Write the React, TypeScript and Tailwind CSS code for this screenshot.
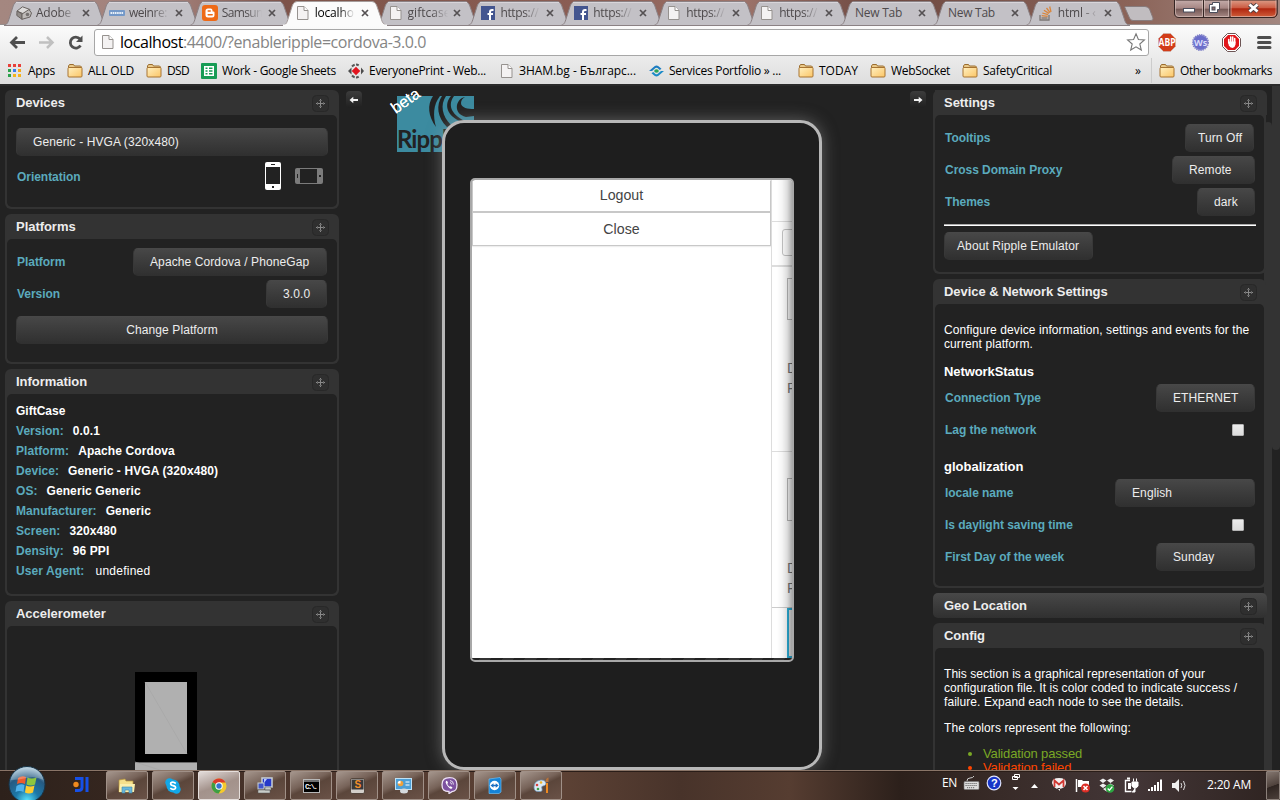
import React, { useLayoutEffect, useRef } from "react";

/* Text whose tracking is adjusted so that it fills a given width. */
function Fit({ w, children, className = "" }: { w: number; children: React.ReactNode; className?: string }) {
  const ref = useRef<HTMLSpanElement>(null);
  useLayoutEffect(() => {
    const el = ref.current;
    if (!el) return;
    el.style.letterSpacing = "0px";
    const n = (el.textContent || "").length;
    el.style.letterSpacing = (w - el.getBoundingClientRect().width) / n + "px";
  }, [w]);
  return (
    <span ref={ref} className={`inline-block whitespace-nowrap ${className}`}>
      {children}
    </span>
  );
}

/* ---------- small drawings ---------- */

const Page = () => (
  <svg width="12" height="14" viewBox="0 0 12 14" className="shrink-0">
    <path d="M.5.5h6.5l4 4v9H.5z" fill="#f4f2f2" stroke="#96928f" />
    <path d="M7 .5v4h4" fill="#fff" stroke="#96928f" />
  </svg>
);
const Folder = () => (
  <svg width="16" height="14" viewBox="0 0 16 14" className="shrink-0">
    <defs>
      <linearGradient id="fold" x1="0" y1="0" x2="1" y2="1">
        <stop offset="0" stopColor="#fff0c0" />
        <stop offset="1" stopColor="#fbc566" />
      </linearGradient>
    </defs>
    <path d="M1.500 4V2l1-1.500h4L7.500 2h6l1 1v2z" fill="#e9c98a" stroke="#9a6c2e" />
    <path d="M1 4.500q0-1 1-1h12.500q.5 0 .5 1v7.500q0 1-1 1H2q-1 0-1-1z" fill="url(#fold)" stroke="#a87432" />
  </svg>
);
const Facebook = () => (
  <svg width="14" height="14" viewBox="0 0 14 14">
    <rect width="14" height="14" fill="#43558f" />
    <path d="M12.5 4H11c-1.400 0-2 .8-2 2v8M6.500 8h5.500" fill="none" stroke="#fff" strokeWidth="2" />
  </svg>
);
const Cube = () => (
  <svg width="16" height="14" viewBox="0 0 16 14">
    <path d="M1 5L6.500.8 14 3.500 9 8.500z" fill="#dddbda" stroke="#68625f" />
    <path d="M1 5l5 3v5.300L.8 9.500z" fill="#918c89" stroke="#68625f" />
    <path d="M6 8l7-4.500 2.500 3.500-1.500 4-8 2.300z" fill="#bebab8" stroke="#68625f" />
    <circle cx="11.500" cy="8.500" r="1.800" fill="#757170" />
  </svg>
);
const Weinre = () => (
  <svg width="16" height="6" viewBox="0 0 16 6">
    <rect width="16" height="6" rx="1" fill="#7398c8" />
    <path d="M1.500 3h13" stroke="#e8f0f8" strokeWidth="2" strokeDasharray="1.600 .6" />
  </svg>
);
const Blogger = () => (
  <svg width="16" height="16" viewBox="0 0 16 16">
    <rect width="16" height="16" rx="3" fill="#ee6a17" />
    <path d="M6 3.500h2.500q2 0 2 2v1h1q1 0 1 1v2.500q0 2.500-2.500 2.500H6q-2.500 0-2.500-2.500V6q0-2.500 2.500-2.500z" fill="#fff" />
    <path d="M6.200 6h2M6.200 9.800h4" stroke="#ee6a17" strokeWidth="1.500" strokeLinecap="round" />
  </svg>
);
const StackO = () => (
  <svg width="13" height="15" viewBox="0 0 13 15">
    <path d="M1 9v5h9V9" fill="none" stroke="#7b7674" strokeWidth="1.300" />
    <path d="M2.500 12h6" stroke="#8a7a6c" strokeWidth="1.400" />
    <path d="M2.700 9.700l6 .7M3.300 7l5.800 1.700M4.900 4.200L10 7.400M7.500 2l3.600 4.700M10.700.5l1.300 5.500" stroke="#d9853b" strokeWidth="1.300" />
  </svg>
);

type Tab = { icon: React.ReactNode; text: string; w: number };
const tabs: Tab[] = [
  { icon: <Cube />, text: "Adobe", w: 35 },
  { icon: <Weinre />, text: "weinre:", w: 38 },
  { icon: <Blogger />, text: "Samsun", w: 41 },
  { icon: <Page />, text: "localho", w: 39 },
  { icon: <Page />, text: "giftcase", w: 43 },
  { icon: <Facebook />, text: "https://", w: 38 },
  { icon: <Facebook />, text: "https://", w: 38 },
  { icon: <Page />, text: "https://", w: 38 },
  { icon: <Page />, text: "https://", w: 38 },
  { icon: null, text: "New Tab", w: 47 },
  { icon: null, text: "New Tab", w: 47 },
  { icon: <StackO />, text: "html - ‹", w: 38 },
];

function TabItem({ tab, active }: { tab: Tab; active: boolean }) {
  return (
    <div className={`relative h-[26px] w-[92.900px] shrink-0 ${active ? "z-10" : ""}`}>
      <svg width="104" height="26" viewBox="0 0 104 26" className="absolute left-0 top-0">
        <path
          d="M0 25.500C4 24 4 22 6 16L9.500 5Q11 1.500 14 1.500H89Q92 1.500 93.500 5L98 18C99.500 23 100 24 104 25.500z"
          fill={active ? "#fbfbfb" : "#c3c1c6"}
          stroke={active ? "#a59c9b" : "#8b8184"}
          strokeWidth="1"
        />
        {active ? <path d="M0 25.500H104" stroke="#fbfbfb" strokeWidth="2" /> : <path d="M12 2.500H91" stroke="#d8d5da" />}
      </svg>
      <div className="relative flex h-[26px] items-center pl-[12px]">
        {tab.icon && <div className="flex w-[20px] items-center justify-center pr-1">{tab.icon}</div>}
        <div
          className={`flex h-[18px] flex-1 items-center overflow-hidden text-[12px] leading-[18px] ${active ? "text-black" : "text-[#4e4a4c]"} ${tab.icon ? "[mask-image:linear-gradient(90deg,#000_24px,transparent_40px)]" : "pl-[3px]"}`}
        >
          <Fit w={tab.w}>{tab.text}</Fit>
        </div>
        <svg width="8" height="8" viewBox="0 0 8 8" className="mr-[7px] shrink-0">
          <path d="M1 1l6 6M7 1L1 7" stroke="#555153" strokeWidth="1.700" />
        </svg>
      </div>
    </div>
  );
}

function WindowControls() {
  return (
    <svg width="104" height="19" viewBox="0 0 104 19" className="absolute left-[1174px] top-0">
      <defs>
        <linearGradient id="wc" x1="0" y1="0" x2="0" y2="1">
          <stop offset="0" stopColor="#c5adab" />
          <stop offset=".48" stopColor="#a58582" />
          <stop offset=".5" stopColor="#735653" />
          <stop offset="1" stopColor="#a98b87" />
        </linearGradient>
        <linearGradient id="wr" x1="0" y1="0" x2="0" y2="1">
          <stop offset="0" stopColor="#dc9c87" />
          <stop offset=".45" stopColor="#cc5b42" />
          <stop offset=".5" stopColor="#b0260f" />
          <stop offset="1" stopColor="#d2603c" />
        </linearGradient>
      </defs>
      <path d="M.5 0V13q0 4.500 4.500 4.500H98q5 0 5-4.500V0z" fill="url(#wc)" stroke="#352523" />
      <path d="M56 0V17.500H98q5 0 5-4.500V0z" fill="url(#wr)" stroke="#352523" />
      <path d="M29.500 0V17.500" stroke="#352523" />
      <path d="M1.500 0V13q0 3.500 3.500 3.500H28.500V0M30.500 0V16.500H54.500V0M57 0V16.500H98q4 0 4-3.500V0" fill="none" stroke="#dfc9c4" strokeOpacity=".6" />
      <rect x="9.500" y="8.500" width="11" height="3.500" fill="#fff" stroke="#4b4e5c" />
      <path d="M38.500 2.500h7v7h-2v3h-8v-8h3z" fill="#fff" stroke="#4b4e5c" />
      <rect x="38" y="7" width="3" height="3" fill="#8d6d6a" stroke="#4b4e5c" />
      <path d="M75.500 4.500l8 7M83.500 4.500l-8 7" stroke="#4b4144" strokeWidth="4.500" />
      <path d="M75.500 4.500l8 7M83.500 4.500l-8 7" stroke="#fff" strokeWidth="2.800" />
    </svg>
  );
}

function TabStrip() {
  return (
    <div className="relative flex h-[25px] shrink-0 bg-[linear-gradient(90deg,#a48780_0,#a3817b_170px,#7d5349_285px,#8b5e54_600px,#9d746b_740px,#6d4840_880px,#8b6459_1130px,#a38780_1280px)] pl-[4px] shadow-[inset_0_-1px_0_#958d8c]">
      {tabs.map((t, i) => (
        <TabItem key={i} tab={t} active={i === 3} />
      ))}
      <svg width="34" height="17" viewBox="0 0 34 17" className="ml-[3px] mt-[5px] shrink-0">
        <path d="M3 1.500H23Q26 1.500 27.500 4L31 13Q31.500 15.500 29 15.500H11Q8.500 15.500 7.500 13L3.500 4Q2.500 2 3 1.500z" fill="#c1bdc0" stroke="#877b7c" />
      </svg>
      <WindowControls />
    </div>
  );
}

function Toolbar() {
  return (
    <div className="relative z-10 flex h-[33px] shrink-0 items-center">
      <svg width="94" height="33" viewBox="0 0 94 33" className="shrink-0">
        <path d="M25 17.500H12M17 12l-5.500 5.500L17 23" fill="none" stroke="#4f4f4f" strokeWidth="2.800" />
        <path d="M39 17.500H52M47 12l5.500 5.500L47 23" fill="none" stroke="#c0c0c0" strokeWidth="2.500" />
        <path d="M80.500 20.500a5.500 5.500 0 1 1-.5-6.500" fill="none" stroke="#4f4f4f" strokeWidth="2.800" />
        <path d="M82.500 10.500v6.500h-6.500z" fill="#4f4f4f" />
      </svg>
      <div className="mt-px flex h-[27px] w-[1055px] items-center rounded-[3px] border border-[#a7a7a7] bg-white pl-[7px]">
        <div className="flex w-[18px]">
          <Page />
        </div>
        <Fit w={306} className="text-[16px] leading-[24px] text-[#858585]">
          <span className="text-black">localhost</span>:4400/?enableripple=cordova-3.0.0
        </Fit>
        <svg width="20" height="20" viewBox="0 0 20 20" className="ml-auto mr-[2px]">
          <path d="M10 1.800l2.400 5.700 6 .5-4.600 4 1.500 6L10 14.800 4.700 18l1.500-6-4.600-4 6-.5z" fill="#fff" stroke="#777" strokeWidth="1.100" />
        </svg>
      </div>
      <svg width="131" height="33" viewBox="0 0 131 33" className="shrink-0">
        <path d="M14.500 8.500h7l5 5v8l-5 5h-7l-5-5v-8z" fill="#d23c19" stroke="#c9b9b3" strokeWidth=".6" />
        <text x="9.500" y="21" fontSize="10" fontWeight="700" fill="#fff" fontFamily="Open Sans" textLength="17" lengthAdjust="spacingAndGlyphs">
          ABP
        </text>
        <circle cx="51.500" cy="17.500" r="7.500" fill="#6a6dca" stroke="#8082c8" strokeWidth="2" strokeDasharray="1.300 .8" />
        <text x="45" y="21" fontSize="9" fontWeight="700" fill="#d9dafa" fontFamily="Open Sans">
          Ws
        </text>
        <path d="M78.500 8.500h8l5 5v8l-5 5h-8l-5-5v-8z" fill="#fff" stroke="#6d5555" />
        <path d="M79 10h7l4 4v7l-4 4h-7l-4-4v-7z" fill="#e1161a" />
        <path d="M79.700 18v-3.500M81.700 17v-5M83.700 17v-5M85.700 18v-4.500" stroke="#fff" strokeWidth="1.500" strokeLinecap="round" />
        <path d="M79 16.500h7.500v3q-.5 3-3 3.500-2.500-.2-3.700-2.700z" fill="#fff" />
        <path d="M109.500 12.500h11.500M109.500 17.500h11.500M109.500 22.500h11.500" stroke="#4e4e4e" strokeWidth="3" strokeLinecap="round" />
      </svg>
    </div>
  );
}

const AppsIcon = () => (
  <svg width="13" height="13" viewBox="0 0 13 13">
    {["#e8403a", "#e8403a", "#e8403a", "#2ca24c", "#3b7ded", "#f5a71c", "#2ca24c", "#f5b41c", "#f5b41c"].map((c, i) => (
      <rect key={i} x={(i % 3) * 5} y={Math.floor(i / 3) * 5} width="3" height="3" fill={c} />
    ))}
  </svg>
);
const SheetIcon = () => (
  <svg width="16" height="16" viewBox="0 0 16 16">
    <rect width="16" height="16" rx="1" fill="#179c55" />
    <rect x="3" y="3" width="10" height="10" fill="#fff" />
    <path d="M4.500 5.300h2M8 5.300h3.500M4.500 8h2M8 8h3.500M4.500 10.700h2M8 10.700h3.500" stroke="#179c55" strokeWidth="1.400" />
  </svg>
);
const EveryonePrint = () => (
  <svg width="16" height="16" viewBox="0 0 16 16">
    <path d="M4 3.500Q8-.5 12 3.500" fill="none" stroke="#555" strokeWidth="2" strokeDasharray="3 1.500" />
    <path d="M4 12.500Q8 16.500 12 12.500" fill="none" stroke="#555" strokeWidth="2" strokeDasharray="3 1.500" />
    <path d="M0 8l3.500-3.500v7zM16 8l-3-3.500v7z" fill="#4d4d4d" />
    <path d="M8 3.700L12.300 8 8 12.300 3.700 8z" fill="#e1141e" />
  </svg>
);
const EyeIcon = () => (
  <svg width="15" height="12" viewBox="0 0 15 12">
    <path d="M0 6L5.500 1.200Q7.500-.3 9.500 1.200L12.500 3.700 10.800 5 8.500 3Q7.500 2.300 6.500 3L3 6z" fill="#1b7cc1" />
    <path d="M15 6L9.500 10.800Q7.500 12.300 5.500 10.800L2.500 8.300 4.200 7 6.500 9Q7.500 9.700 8.500 9L12 6z" fill="#1b8ac8" />
    <ellipse cx="7.500" cy="6" rx="2.300" ry="1.700" fill="#2aa45a" />
  </svg>
);

function Bookmark({ icon, x, w, children }: { icon?: React.ReactNode; x: string; w: number; children: string }) {
  return (
    <div className={`flex h-full shrink-0 items-center ${x}`}>
      {icon && <div className="flex w-[21px] items-center">{icon}</div>}
      <Fit w={w}>{children}</Fit>
    </div>
  );
}

function Bookmarks() {
  return (
    <div className="flex h-[26px] shrink-0 items-center pb-px text-[12px] leading-[18px] text-black">
      <Bookmark icon={<AppsIcon />} x="w-[59px] pl-[8px] [&>div]:w-[20px]" w={27}>Apps</Bookmark>
      <Bookmark icon={<Folder />} x="w-[79px] pl-[8px]" w={46}>ALL OLD</Bookmark>
      <Bookmark icon={<Folder />} x="w-[55px] pl-[8px]" w={22}>DSD</Bookmark>
      <Bookmark icon={<SheetIcon />} x="w-[147px] pl-[8px]" w={114}>Work - Google Sheets</Bookmark>
      <Bookmark icon={<EveryonePrint />} x="w-[153px] pl-[8px]" w={117}>EveryonePrint - Web...</Bookmark>
      <Bookmark icon={<Page />} x="w-[148px] pl-[8px] [&>div]:w-[18px]" w={117}>ЗНАМ.bg - Българс...</Bookmark>
      <Bookmark icon={<EyeIcon />} x="w-[149px] pl-[8px] [&>div]:w-[20px]" w={112}>Services Portfolio » ...</Bookmark>
      <Bookmark icon={<Folder />} x="w-[72px] pl-[8px]" w={39}>TODAY</Bookmark>
      <Bookmark icon={<Folder />} x="w-[92px] pl-[8px]" w={59}>WebSocket</Bookmark>
      <Bookmark icon={<Folder />} x="w-[181px] pl-[8px]" w={69}>SafetyCritical</Bookmark>
      <Bookmark x="w-[16px]" w={8}>»</Bookmark>
      <Bookmark icon={<Folder />} x="border-l border-[#ccc] pl-[7px]" w={92}>Other bookmarks</Bookmark>
    </div>
  );
}

/* ---------- emulator panels ---------- */

const MoveHandle = () => (
  <svg width="17" height="17" viewBox="0 0 17 17" className="mt-px block">
    <rect x=".5" y=".5" width="16" height="16" rx="4" fill="#2f2f2f" stroke="#282828" />
    <path d="M8.500 4v9M4 8.500h9" stroke="#8a8a8a" />
    <path d="M7 5.500h3M7 11.500h3M5.500 7v3M11.500 7v3" stroke="#666" />
  </svg>
);

function Panel({ title, h, right, children }: { title: string; h: string; right?: boolean; children?: React.ReactNode }) {
  return (
    <section className={`shrink-0 ${h}`}>
      <div className={`flex h-full flex-col rounded-[6px] bg-[#333] pb-[2px] pl-[2px] ${right ? "w-[333px]" : "w-[334px]"} pr-[2px]`}>
        <header className={`flex h-[25px] shrink-0 items-center justify-between pl-[9px] text-[13px] font-bold text-[#ededed] ${right ? "pr-[7px]" : "pr-[8px]"}`}>
          <span className="-tracking-[.04px]">{title}</span>
          <MoveHandle />
        </header>
        <div className="min-h-0 flex-1 rounded-[5px] bg-[#222]">{children}</div>
      </div>
    </section>
  );
}

function Btn({ className, children }: { className: string; children: string }) {
  return (
    <div className={`flex h-[28px] items-center rounded-[5px] border border-t-[#484848] border-x-[#383838] border-b-[#303030] bg-linear-to-b from-[#474747] to-[#303030] pb-px text-[12px] tracking-[.1px] text-[#ededed] ${className}`}>
      {children}
    </div>
  );
}

function Row({ label, children, className = "h-[32px]" }: { label: string; children?: React.ReactNode; className?: string }) {
  return (
    <div className={`flex items-center justify-between text-[12px] font-bold text-[#5baabd] ${className}`}>
      <span className="-tracking-[.04px]">{label}</span>
      <div className="font-normal">{children}</div>
    </div>
  );
}

const info: [string, string][] = [
  ["Version:", "0.0.1"],
  ["Platform:", "Apache Cordova"],
  ["Device:", "Generic - HVGA (320x480)"],
  ["OS:", "Generic Generic"],
  ["Manufacturer:", "Generic"],
  ["Screen:", "320x480"],
  ["Density:", "96 PPI"],
];

function LeftColumn() {
  return (
    <aside className="flex w-[345px] shrink-0 flex-col gap-[5px] overflow-hidden pl-[5px] pt-[4px]">
      <Panel title="Devices" h="h-[119px]">
        <div className="pl-[9px] pr-[9px] pt-[13px]">
          <Btn className="pl-[16px]">Generic - HVGA (320x480)</Btn>
          <Row label="Orientation" className="mt-[5px] h-[30px] pl-px [&>span]:pt-[2px]">
            <div className="flex items-center pr-[5px]">
              <svg width="16" height="28" viewBox="0 0 16 28">
                <rect width="16" height="28" rx="2" fill="#fff" />
                <rect x="1" y="5" width="14" height="17" fill="#222" />
                <path d="M6 2.500h4" stroke="#222" />
                <rect x="7" y="24" width="2" height="2" fill="#222" />
              </svg>
              <svg width="28" height="16" viewBox="0 0 28 16" className="ml-[14px]">
                <rect width="28" height="16" rx="2" fill="#7b7b7b" />
                <rect x="5" y="1" width="17" height="14" fill="#222" />
                <path d="M2.500 6v4" stroke="#222" />
                <rect x="24" y="7" width="2" height="2" fill="#222" />
              </svg>
            </div>
          </Row>
        </div>
      </Panel>
      <Panel title="Platforms" h="h-[150px]">
        <div className="px-[9px] pt-[7px]">
          <div className="pl-px pr-px">
            <Row label="Platform">
              <Btn className="w-[194px] pl-[16px]">Apache Cordova / PhoneGap</Btn>
            </Row>
            <Row label="Version">
              <Btn className="w-[61px] pl-[16px]">3.0.0</Btn>
            </Row>
          </div>
          <Btn className="mt-[6px] justify-center">Change Platform</Btn>
        </div>
      </Panel>
      <Panel title="Information" h="h-[227px]">
        <div className="pl-[9px] pt-[7px] text-[12px] font-bold leading-[20px] text-white">
          <div>GiftCase</div>
          {info.map(([k, v]) => (
            <div key={k} className="flex gap-[9px]">
              <span className="tracking-[.05px] text-[#5baabd]">{k}</span>
              <span className="tracking-[.1px]">{v}</span>
            </div>
          ))}
          <div className="flex gap-[11px]">
            <span className="tracking-[.08px] text-[#5baabd]">User Agent:</span>
            <span className="font-normal tracking-[.25px]">undefined</span>
          </div>
        </div>
      </Panel>
      <Panel title="Accelerometer" h="h-[240px]">
        <svg width="62" height="110" viewBox="0 0 62 110" className="ml-[128px] mt-[46px]">
          <rect width="62" height="90" fill="#000" />
          <rect x="10" y="10" width="42" height="72" fill="#b0b0b0" />
          <path d="M10 10l42 72" stroke="#a6a6a6" strokeWidth=".7" />
          <rect y="90.500" width="62" height="20" fill="#b0b0b0" />
          <path d="M0 90l62 20" stroke="#a6a6a6" strokeWidth=".7" />
        </svg>
      </Panel>
    </aside>
  );
}

const Check = () => (
  <div className="-mt-px mr-[11px] h-[12px] w-[12px] rounded-[1px] border border-[#b4b4b4] bg-linear-to-b from-[#ececec] to-[#dcdcdc]" />
);

function RightColumn() {
  return (
    <aside className="relative flex w-[355px] shrink-0 overflow-hidden">
      <div className="absolute left-[339px] top-[36px] h-[700px] w-[8px] rounded-t-[4px] bg-[#333]" />
      <div className="relative flex w-[347px] shrink-0 flex-col gap-[5px] pl-[8px] pt-[4px]">
        <Panel title="Settings" h="h-[184px] [&_header]:w-[332px] [&_header]:rounded-tr-[6px] [&_header]:bg-[#333] [&_header]:pr-[10px]" right>
          <div className="px-[9px] pt-[7px]">
            <div className="pl-px">
              <Row label="Tooltips">
                <Btn className="mr-px w-[69px] pl-[12px]">Turn Off</Btn>
              </Row>
              <Row label="Cross Domain Proxy">
                <Btn className="w-[83px] pl-[16px]">Remote</Btn>
              </Row>
              <Row label="Themes">
                <Btn className="w-[58px] pl-[16px]">dark</Btn>
              </Row>
            </div>
            <div className="-mr-px mt-[6px] h-[2px] border-b border-t border-b-white border-t-[#aaa]" />
            <Btn className="mt-[6px] w-[149px] pl-[12px]">About Ripple Emulator</Btn>
          </div>
        </Panel>
        <Panel title="Device & Network Settings" h="h-[309px]" right>
          <div className="px-[9px] pt-[19px] text-[12px] leading-[14px] text-white">
            <p className="w-[318px] tracking-[.09px]">Configure device information, settings and events for the current platform.</p>
            <h3 className="mt-[14px] text-[13px] font-bold -tracking-[.08px]">NetworkStatus</h3>
            <div className="mt-[3px] pl-px">
              <Row label="Connection Type">
                <Btn className="w-[99px] pl-[16px]">ETHERNET</Btn>
              </Row>
              <Row label="Lag the network">
                <Check />
              </Row>
            </div>
            <h3 className="mt-[14px] text-[13px] font-bold">globalization</h3>
            <div className="mt-[3px] pl-px">
              <Row label="locale name">
                <Btn className="w-[140px] pl-[16px]">English</Btn>
              </Row>
              <Row label="Is daylight saving time">
                <Check />
              </Row>
              <Row label="First Day of the week">
                <Btn className="w-[99px] pl-[16px]">Sunday</Btn>
              </Row>
            </div>
          </div>
        </Panel>
        <div className="flex h-[25px] w-[334px] shrink-0 items-center justify-between rounded-[5px] bg-linear-to-b from-[#484848] to-[#303030] pl-[11px] pr-[10px] text-[13px] font-bold text-[#ededed]">
          Geo Location
          <MoveHandle />
        </div>
        <Panel title="Config" h="h-[240px]" right>
          <div className="pl-[9px] pt-[19px] text-[12px] leading-[14px] text-white">
            <p className="w-[312px] tracking-[.06px]">
              This section is a graphical representation of your configuration file. It is color coded to indicate success / failure. Expand each node to see the details.
            </p>
            <p className="mt-[12px] tracking-[.1px]">The colors represent the following:</p>
            <ul className="mt-[12px] list-disc pl-[39px] text-[13px] -tracking-[.15px]">
              <li className="text-[#7aa825]">Validation passed</li>
              <li className="text-[#ff4500]">Validation failed</li>
            </ul>
          </div>
        </Panel>
      </div>
      <div className="h-[364px] w-[8px] rounded-b-[4px] bg-[#333]" />
    </aside>
  );
}

const Arrow = ({ flip }: { flip?: boolean }) => (
  <svg width="16" height="17" viewBox="0 0 16 17" className={flip ? "-scale-x-100" : ""}>
    <defs>
      <linearGradient id="ar" x1="0" y1="0" x2="0" y2="1">
        <stop offset="0" stopColor="#3c3c3c" />
        <stop offset="1" stopColor="#202020" />
      </linearGradient>
    </defs>
    <rect width="16" height="17" rx="4" fill="url(#ar)" />
    <path d="M3.500 9L7.300 5.800V8H12v2H7.300v2.200z" fill="#f2f2f2" />
  </svg>
);

function Logo() {
  return (
    <div className="absolute left-[52px] top-[10px] h-[56px] w-[77px]">
      <svg width="77" height="56" viewBox="0 0 77 56" className="absolute left-0 top-0">
        <rect width="77" height="56" fill="#3c8ba0" />
        {/* wave crest made of nested crescents */}
        <path d="M36 0C30 9 31 20 39 31C36 20 36 9 43 0z" fill="#222" />
        <path d="M45 0C39 9 40 21 50 31L54 29C45 20 43 9 49 0z" fill="#222" />
        <path d="M54 0C47 8 49 20 65 26L68 25C53 18 51 8 57 0z" fill="#222" />
        <path d="M68 1C58 3 56 18 69 21L77 20V13C71 13 64 12 64 7C64 4 66 2 68 1z" fill="#222" />
      </svg>
      <div className="absolute left-0 top-[30px] h-[26px] w-[77px] overflow-hidden font-[Lato] text-[24px] font-bold leading-[26px] -tracking-[.9px] text-[#222]">Ripple</div>
      <div className="absolute -left-[7px] -top-[4px] -rotate-[35deg] text-[16px] leading-[18px] text-white [text-shadow:0_0_.5px_#fff]">beta</div>
    </div>
  );
}

function Peek() {
  return (
    <div className="relative h-[478px] w-[20px] overflow-hidden bg-white text-[14px] leading-[16px] text-[#777]">
      <div className="h-[42px] border-b border-[#ddd]" />
      <div className="flex h-[45px] items-start border-b-2 border-[#ddd] pl-[10px] pt-[7px]">
        <div className="h-[27px] w-[20px] shrink-0 rounded-[3px] border border-[#c4c4c4]" />
      </div>
      <div className="h-[185px] border-b border-[#ddd] pl-[15px] pt-[11px]">
        <div className="h-[42px] w-[20px] border border-[#bbb]" />
        <div className="mt-[38px] leading-[20px]">D<br />P</div>
      </div>
      <div className="h-[156px] border-b border-[#ccc] pl-[15px] pt-[26px]">
        <div className="h-[43px] w-[20px] border border-[#bbb]" />
        <div className="mt-[37px] leading-[20px]">D<br />P</div>
      </div>
      <div className="ml-[15px] h-[50px] w-[20px] border-2 border-[#2cb0da] bg-[#eee]" />
      <div className="absolute inset-0 bg-[linear-gradient(90deg,transparent_25%,rgba(0,0,0,.04)_50%,rgba(0,0,0,.13)_75%,rgba(0,0,0,.33)_100%)]" />
    </div>
  );
}

function Phone() {
  return (
    <div className="ml-[97px] mt-[34px] h-[650px] w-[380px] shrink-0 rounded-[22px] border-[3px] border-[#b8b8b8] bg-[#1e1e1e] pl-[25px] pt-[55px] shadow-[0_0_16px_0px_rgba(160,160,160,.5)]">
      <div className="h-[484px] w-[324px] overflow-hidden rounded-[5px] border-2 border-[#a8a8a8] bg-[repeating-linear-gradient(135deg,#222_0_8px,#333_8px_16px)]">
        <div className="flex h-[478px] bg-white">
          <div className="w-[299px] text-center text-[14.2px] text-[#444]">
            <div className="h-[33px] border border-b-2 border-[#c8c8c8] border-t-transparent leading-[29px]">Logout</div>
            <div className="h-[33px] border border-t-0 border-[#c8c8c8] leading-[33px] shadow-[0_1px_1px_#eee]">Close</div>
          </div>
          <div className="w-px bg-[#ddd]" />
          <Peek />
        </div>
      </div>
    </div>
  );
}

function Emulator() {
  return (
    <div className="flex h-[684px] shrink-0 overflow-hidden bg-[#222] font-['Liberation_Sans',Arial,sans-serif]">
      <LeftColumn />
      <main className="relative flex w-[580px] shrink-0">
        <Logo />
        <div className="absolute left-px top-[5px]">
          <Arrow />
        </div>
        <div className="absolute -right-px top-[5px]">
          <Arrow flip />
        </div>
        <div className="relative">
          <Phone />
        </div>
      </main>
      <RightColumn />
    </div>
  );
}

/* ---------- task bar ---------- */

const taskIcons: React.ReactNode[] = [
  <svg key="e" width="18" height="18" viewBox="0 0 18 18">
    <path d="M1 3l6-1 1 2h7v11H1z" fill="#f6e08c" stroke="#b59436" strokeWidth=".7" />
    <path d="M2 7h15l-1 8H1z" fill="#fbefae" />
    <path d="M4 16v-6h10v6h-3v-3H7v3z" fill="#68b7dc" stroke="#3d86ad" strokeWidth=".6" />
  </svg>,
  <svg key="s" width="16" height="16" viewBox="0 0 16 16">
    <circle cx="4.500" cy="4.500" r="4.200" fill="#12a8e8" />
    <circle cx="11.500" cy="11.500" r="4.200" fill="#12a8e8" />
    <circle cx="8" cy="8" r="6.500" fill="#12a8e8" />
    <path d="M10.800 5.500Q8 3 5.800 4.800 5 7 8 7.600q3.500.8 2.300 3-2.500 1.700-5-.4" fill="none" stroke="#fff" strokeWidth="1.700" />
  </svg>,
  <svg key="c" width="16" height="16" viewBox="0 0 16 16">
    <circle cx="8" cy="8" r="7.500" fill="#f4c92d" />
    <path d="M8 8L1.500 4.200A7.500 7.500 0 0 1 14.500 4.500H8z" fill="#db3b2b" />
    <path d="M1.500 4.200A7.500 7.500 0 0 0 7.700 15.500L11 10z" fill="#3d9e44" />
    <circle cx="8" cy="8" r="3.700" fill="#fff" />
    <circle cx="8" cy="8" r="2.700" fill="#3674ce" />
  </svg>,
  <svg key="p" width="17" height="17" viewBox="0 0 17 17">
    <rect x="5" y="1" width="10" height="9" fill="#2639c9" stroke="#c9d1d6" strokeWidth="1.500" />
    <path d="M7 2l3 0-3 4z" fill="#b9c9ff" />
    <rect x="1" y="6" width="6" height="6" fill="#4054c9" stroke="#c9d1d6" />
    <path d="M1 13h12v3H1zM8 10h6v3H8z" fill="#c9cdc9" stroke="#555" strokeWidth=".5" />
  </svg>,
  <svg key="t" width="17" height="14" viewBox="0 0 17 14">
    <rect x=".5" y=".5" width="16" height="13" fill="#000" stroke="#b8b8b8" />
    <path d="M1 2h15" stroke="#ddd" />
    <text x="2" y="10" fontSize="7.500" fontWeight="700" fill="#fff" fontFamily="Liberation Mono" textLength="13">C:\.</text>
  </svg>,
  <svg key="u" width="15" height="16" viewBox="0 0 15 16">
    <rect x=".5" y=".5" width="14" height="15" rx="1.500" fill="#d3cfca" stroke="#54473e" />
    <rect x="1.500" y="1.500" width="12" height="10" fill="#393939" />
    <text x="4.500" y="10" fontSize="10" fontWeight="700" fill="#f0902a" fontFamily="Liberation Sans">S</text>
  </svg>,
  <svg key="m" width="17" height="16" viewBox="0 0 17 16">
    <rect x=".5" y=".5" width="16" height="11" fill="#4d9fd6" stroke="#bfe1f5" />
    <circle cx="5.500" cy="5.500" r="2.800" fill="#f0a13a" />
    <path d="M5.500 5.500V2.700a2.800 2.800 0 0 0-2.800 2.800z" fill="#fff" />
    <path d="M10.500 4h4M10.500 7h4" stroke="#fff" />
    <ellipse cx="9" cy="13" rx="4" ry="2.500" fill="#d5dade" />
  </svg>,
  <svg key="v" width="17" height="17" viewBox="0 0 17 17">
    <path d="M8.500.7c5 0 7.500 1.500 7.500 7s-2 6.500-5 7L8 16.500v-2C3 14.500 1 13 1 7.700s2.500-7 7.500-7z" fill="#7d52a0" stroke="#eee3f5" strokeWidth="1.300" />
    <path d="M5 4q-1 1 .5 3.500T9 11.500q2 .8 2.500-1l-1.800-1.300-1 .6Q7.300 9 6.300 7L7 5.800 6 3.800z" fill="#fff" />
    <path d="M9 3.500q3.500.5 3.500 4M9 5.500q1.500.3 1.700 2" stroke="#fff" fill="none" strokeWidth=".8" />
  </svg>,
  <svg key="w" width="14" height="17" viewBox="0 0 14 17">
    <path d="M1 2l11-1.500 1 2V15l-2 1.500H1z" fill="#1584d8" stroke="#6fbdf2" strokeWidth=".7" />
    <circle cx="6.500" cy="8.500" r="4.700" fill="#fff" />
    <path d="M2.500 8.500l3-2.200v1.500h2.200V6.300l3 2.200-3 2.200V9.200H5.500v1.500z" fill="#1b6fc2" />
  </svg>,
  <svg key="g" width="17" height="17" viewBox="0 0 17 17">
    <path d="M1 10Q1 4 8 3q5 0 5 4-1 2-3 2t-1 3-4 2.500Q1 14.500 1 10z" fill="#dbe9f4" stroke="#6d98bd" strokeWidth=".7" />
    <circle cx="4" cy="8" r="1.300" fill="#d84141" />
    <circle cx="8" cy="5.500" r="1.300" fill="#efb52f" />
    <circle cx="5" cy="12" r="1.300" fill="#3f9f49" />
    <path d="M14 6v10" stroke="#ef8a1f" strokeWidth="2" />
    <path d="M12.500 5q0-4 3-4.500V5z" fill="#b9743b" />
  </svg>,
];

function Taskbar() {
  return (
    <div className="relative flex h-[30px] shrink-0 border-t border-[#8a7568] bg-[linear-gradient(90deg,#2d211b_0,#35261f_110px,#51392f_330px,#5d4235_560px,#48332a_680px,#563d31_790px,#2c201b_900px,#382b28_1000px,#433637_1130px,#2e2320_1280px)] font-['Open_Sans',sans-serif] shadow-[inset_0_1px_0_#2a1d18]">
      <svg width="46" height="34" viewBox="0 0 46 34" className="-mt-[5px] ml-[4px] shrink-0">
        <defs>
          <radialGradient id="orb" cx=".5" cy=".95" r=".95">
            <stop offset="0" stopColor="#58e5ff" />
            <stop offset=".35" stopColor="#1c78a8" />
            <stop offset=".7" stopColor="#265a82" />
            <stop offset="1" stopColor="#b8d5e4" />
          </radialGradient>
        </defs>
        <circle cx="23" cy="18.500" r="18" fill="url(#orb)" stroke="#173346" />
        <path d="M14 12q4-3 8-1l-1 7q-4-2-8 0z" fill="#ee5b2c" />
        <path d="M23.500 11.500q4 2 9 0l-1.500 7q-4 2-8.500 0z" fill="#8dc63f" />
        <path d="M12.500 20q4-3 8-1l-1 7q-4-2-8 0z" fill="#4fb2ec" />
        <path d="M22 19.500q4 2 8.500 0l-1.500 7q-4 2-8 0z" fill="#fdcc2f" />
        <path d="M6.500 14Q10 2 23 1.500T39.500 14Q32 10 23 12T6.500 14z" fill="#fff" opacity=".25" />
      </svg>
      <svg width="18" height="18" viewBox="0 0 18 18" className="ml-[22px] mt-[5px] shrink-0">
        <path d="M3 2.500h7v9q0 3-4 3H3" fill="none" stroke="#1650e8" strokeWidth="3" />
        <path d="M15 1v15" stroke="#1650e8" strokeWidth="3" />
        <circle cx="4" cy="8.500" r="2.700" fill="#f08a1e" />
      </svg>
      <div className="ml-[16px] flex gap-[4px]">
        {taskIcons.map((icon, i) => (
          <div
            key={i}
            className={`flex h-[29px] w-[42px] items-center justify-center rounded-[2px] border ${i === 2 ? "border-[#e5dedb] bg-[linear-gradient(160deg,#e3dcda_0,#a3928b_50%,#aa9b95_100%)]" : "border-[#a09087] bg-[linear-gradient(155deg,#a5968d_0,#776359_40%,#5b463b_52%,#6a5247_100%)]"}`}
          >
            {icon}
          </div>
        ))}
      </div>
      <div className="ml-[380px] flex items-start text-[12px] text-white">
        <Fit w={15} className="pt-[3px] leading-[18px]">EN</Fit>
      </div>
      <svg width="250" height="29" viewBox="0 0 250 29" className="ml-[5px] shrink-0">
        {/* keyboard */}
        <path d="M5 10q0-3 3-3t4-2" fill="none" stroke="#ccc" />
        <rect x="2" y="10.500" width="15" height="8" rx="1" fill="#ddd" stroke="#777" strokeWidth=".6" />
        <path d="M3.500 12.500h12M3.500 14.500h12M5 16.700h8" stroke="#666" strokeWidth="1" strokeDasharray="1.200 .8" />
        {/* help */}
        <circle cx="32" cy="12" r="6.800" fill="#1735c8" stroke="#dfe4ff" strokeWidth="1.200" />
        <text x="29" y="16" fontSize="11" fontWeight="700" fill="#fff" fontFamily="Liberation Sans">?</text>
        <path d="M52.500 3.500h5v3h-5zM50.500 5.500h5v3h-5z" fill="#3a2e2a" stroke="#fff" />
        <path d="M50.500 16h6l-3 3z" fill="#fff" />
        <path d="M69 17h7l-3.500-4z" fill="#fff" />
        {/* mail notifier */}
        <path d="M90 12q0-5 7-5t7 5-7 6q-5 0-7-6zM95 17l3 3v-3z" fill="#f3f0f0" />
        <path d="M92.500 16V9.500l4.500 4 4.500-4V16" fill="none" stroke="#cf3832" strokeWidth="1.800" />
        {/* action centre flag */}
        <path d="M114.500 8v13" stroke="#fff" strokeWidth="1.500" />
        <path d="M116 9h4l1 1h6v7h-7l-1-1h-3z" fill="#fff" />
        <circle cx="123.500" cy="17" r="4.500" fill="#dc2d25" />
        <path d="M121.500 15l4 4M125.500 15l-4 4" stroke="#fff" strokeWidth="1.500" />
        {/* dropbox */}
        <path d="M141 7.500l3.500 2-3.500 2.500-3.500-2.500zM148.500 7.500l3.500 2-3.500 2.500-3.500-2.500zM141 12.500l3.500 2-3.500 2.500-3.500-2.500zM148.500 12.500l3.500 2-3.500 2.500-3.500-2.500zM141 18l3.500-2 3 2-3 2.500z" fill="#eee" />
        <circle cx="148" cy="17.500" r="4.300" fill="#2da742" />
        <path d="M145.700 17.500l1.700 1.700 3-3.500" fill="none" stroke="#fff" strokeWidth="1.300" />
        {/* battery and plug */}
        <path d="M168 9.500h-4.500v11h6" fill="none" stroke="#fff" strokeWidth="1.400" />
        <path d="M165 7.500h3" stroke="#fff" strokeWidth="2" />
        <path d="M167.500 12v6" stroke="#fff" strokeWidth="3" />
        <path d="M170 11h6v4q-1 2-3 2t-3-2zM171.500 7.500v3M174.500 7.500v3M173 17v4h-3" fill="#fff" stroke="#fff" />
        {/* signal */}
        <path d="M187 20v-2M190 20v-4M193 20v-6M196 20v-9M199 20V8.500" stroke="#fff" strokeWidth="2" />
        {/* speaker */}
        <path d="M210 12h3l4-4v13l-4-4h-3z" fill="#eee" />
        <path d="M219 12q1.500 2.500 0 5M221.500 10q3 4.500 0 9" fill="none" stroke="#ddd" />
      </svg>
      <Fit w={44} className="-ml-[5px] mt-[5px] text-[12px] leading-[18px] text-white">2:20 AM</Fit>
      <div className="absolute right-0 top-0 h-[29px] w-[14px] rounded-[1px] border border-[#8b807a] bg-[linear-gradient(160deg,#83766f_0,#4f423c_50%,#2f2521_52%,#4b3f3a_100%)]" />
    </div>
  );
}

export default function App() {
  return (
    <div className="flex h-[800px] w-[1280px] flex-col overflow-hidden bg-[#222] font-['Open_Sans','Noto_Sans',sans-serif]">
      <TabStrip />
      <div className="flex h-[61px] shrink-0 flex-col border-b-2 border-[#2a2a2a] bg-linear-to-b from-[#fbfbfb] to-[#dedede]">
        <Toolbar />
        <Bookmarks />
      </div>
      <Emulator />
      <Taskbar />
    </div>
  );
}
